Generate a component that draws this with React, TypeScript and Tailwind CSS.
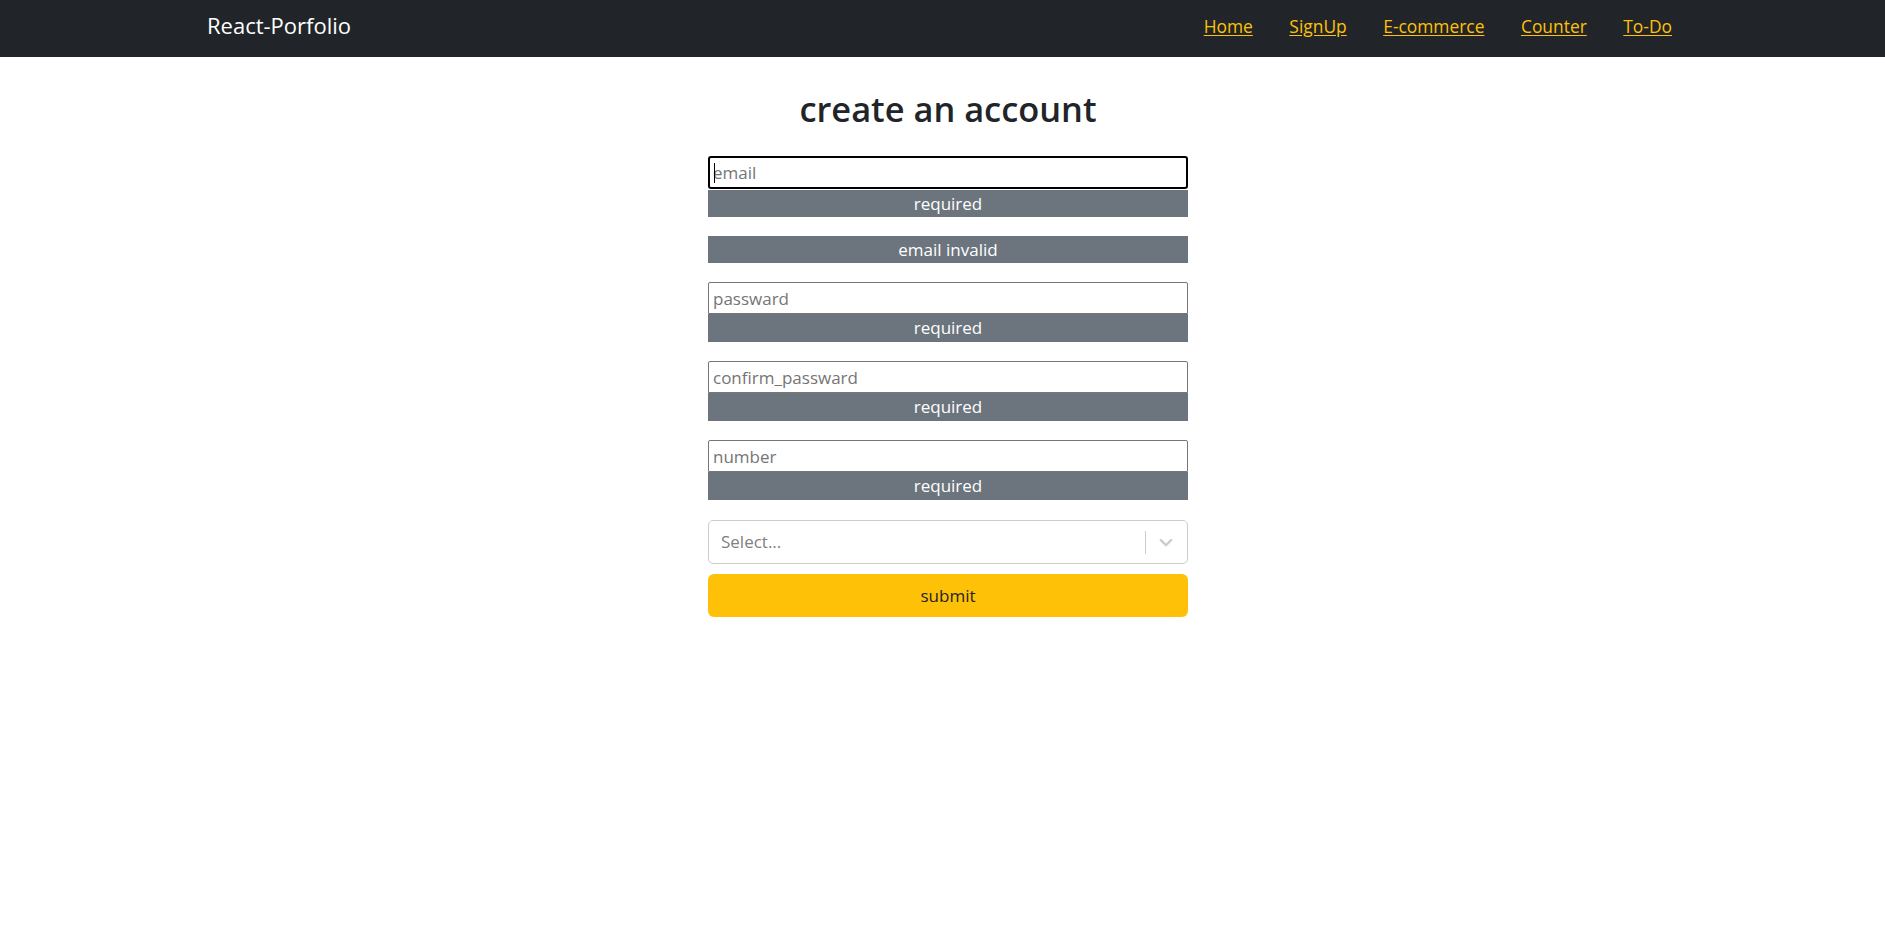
import React from "react";

const FONT = { fontFamily: '"Open Sans", "Noto Sans", Arial, sans-serif' };

function Field({ placeholder, focused }: { placeholder: string; focused?: boolean }) {
  return (
    <div className="flex flex-col mb-[19px]">
      {focused ? (
        <div className="relative h-[33px] border-2 border-black rounded-[3px] bg-white">
          <input
            readOnly
            placeholder={placeholder}
            className="w-full h-full pl-[3px] text-[17px] outline-none bg-transparent placeholder:text-[#757575]"
          />
          <span className="absolute left-[4px] top-[5px] h-[20px] w-px bg-black" />
        </div>
      ) : (
        <input
          readOnly
          placeholder={placeholder}
          className="h-[32px] border border-[#767676] rounded-t-[2px] pl-[4px] text-[17px] outline-none bg-white placeholder:text-[#757575]"
        />
      )}
      <div
        className={
          "bg-[#6c757d] text-white text-[17px] text-center " +
          (focused ? "mt-[1px] h-[27px] leading-[27px]" : "h-[28px] leading-[28px]")
        }
      >
        required
      </div>
    </div>
  );
}

export default function App() {
  const links = ["Home", "SignUp", "E-commerce", "Counter", "To-Do"];
  return (
    <div className="min-h-screen bg-white text-[#212529]" style={FONT}>
      <nav className="h-[57px] bg-[#212529] flex justify-between items-start pl-[207px] pr-[213px]">
        <div className="pt-[10px] text-[22px] leading-[30px] text-white">React-Porfolio</div>
        <div className="flex gap-[36.5px] pt-[14px]">
          {links.map((l) => (
            <a
              key={l}
              href="#"
              className="text-[17.4px] leading-[24px] text-[#ffc107] underline underline-offset-[2px]"
            >
              {l}
            </a>
          ))}
        </div>
      </nav>

      <main className="flex justify-center pl-[11px]">
        <form className="w-[480px] flex flex-col" onSubmit={(e) => e.preventDefault()}>
          <h2 className="mt-[31px] mb-[26px] text-[34.4px] leading-[42px] font-semibold text-center text-[#212529]">
            create an account
          </h2>

          <Field placeholder="email" focused />
          <div className="mb-[19px] h-[27px] leading-[27px] bg-[#6c757d] text-white text-[17px] text-center">
            email invalid
          </div>
          <Field placeholder="passward" />
          <Field placeholder="confirm_passward" />
          <Field placeholder="number" />

          <div className="mt-[1px] h-[44px] border border-[#cccccc] rounded-[5px] flex items-center bg-white">
            <div className="flex-1 pl-[12px] text-[17px] text-[#808080]">Select...</div>
            <div className="w-px h-[23px] bg-[#cccccc]" />
            <div className="pl-[9px] pr-[10px] flex items-center">
              <svg width="22" height="22" viewBox="0 0 20 20" fill="#cccccc" aria-hidden="true">
                <path d="M4.516 7.548c0.436-0.446 1.043-0.481 1.576 0l3.908 3.747 3.908-3.747c0.533-0.481 1.141-0.446 1.574 0 0.436 0.445 0.408 1.197 0 1.615-0.406 0.418-4.695 4.502-4.695 4.502-0.217 0.223-0.502 0.335-0.787 0.335s-0.57-0.112-0.789-0.335c0 0-4.287-4.084-4.695-4.502s-0.436-1.17 0-1.615z" />
              </svg>
            </div>
          </div>

          <button
            type="submit"
            className="mt-[10px] h-[43px] rounded-[6px] bg-[#ffc107] text-[17px] text-[#212529]"
          >
            submit
          </button>
        </form>
      </main>
    </div>
  );
}
